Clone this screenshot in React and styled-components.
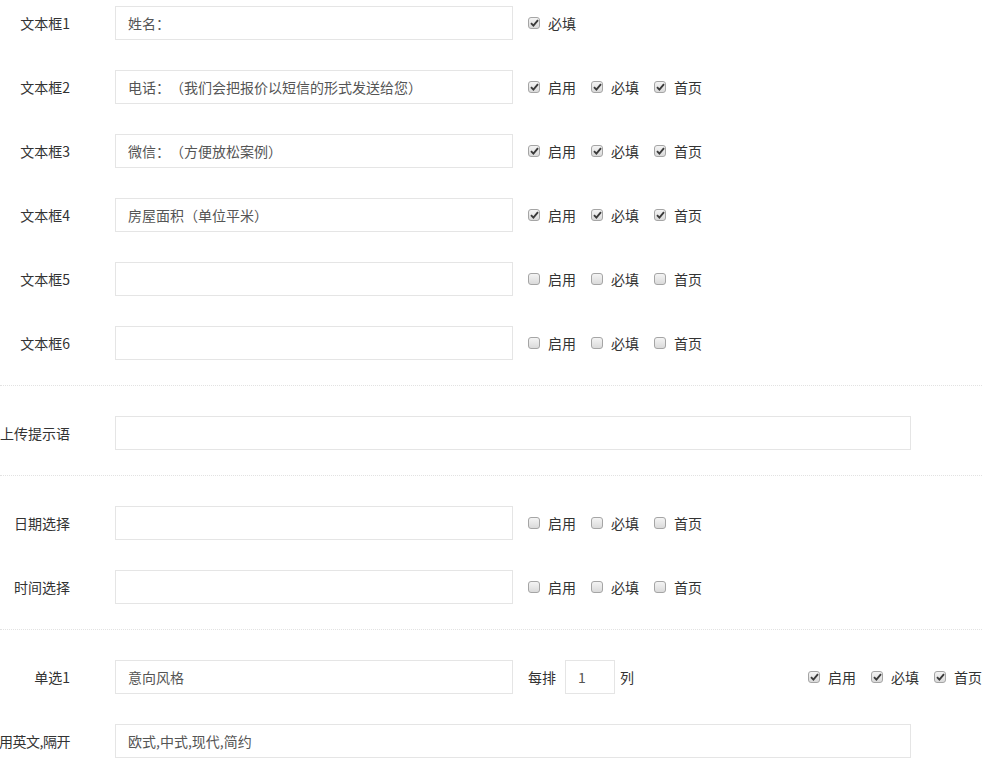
import React from "react";
import styled, { createGlobalStyle } from "styled-components";

const Global = createGlobalStyle`
  html, body { margin: 0; padding: 0; background: #fff; }
  body {
    font-family: "Microsoft YaHei", "Noto Sans CJK SC", "Noto Sans", sans-serif;
    font-size: 14px;
    color: #333;
    overflow: hidden;
    text-spacing-trim: space-all;
  }
  input { text-spacing-trim: space-all; }
`;

const Page = styled.div`
  width: 982px;
`;

const Section = styled.div`
  display: flex;
  flex-direction: column;
  gap: 30px;
  padding-top: ${(p) => p.$top}px;
  padding-bottom: 25px;
  border-bottom: ${(p) => (p.$last ? "none" : "1px dotted #e2e2e2")};
`;

const Row = styled.div`
  display: flex;
  align-items: center;
  height: 34px;
`;

const Label = styled.div`
  width: 70px;
  flex: none;
  display: flex;
  justify-content: flex-end;
  white-space: nowrap;
  color: #333;
  margin-right: 45px;
  letter-spacing: ${(p) => (p.$tight ? "-0.5px" : "0")};
`;

const TextInput = styled.input`
  box-sizing: border-box;
  width: ${(p) => p.$w}px;
  height: 34px;
  flex: none;
  border: 1px solid #e5e5e5;
  padding: 0 12px;
  font: inherit;
  font-size: 14px;
  color: #555;
  background: #fff;
  outline: none;
`;

const Checks = styled.div`
  display: flex;
  align-items: center;
  margin-left: ${(p) => p.$ml}px;
  gap: 15px;
`;

const CheckItem = styled.label`
  display: flex;
  align-items: center;
  white-space: nowrap;
  color: #333;
`;

const Box = styled.span`
  box-sizing: border-box;
  width: 12px;
  height: 12px;
  border: 1px solid #a5a5a5;
  border-radius: 3px;
  background: linear-gradient(#f4f4f4, #dadada);
  margin-right: 8px;
  display: flex;
  align-items: center;
  justify-content: center;
`;

const Inline = styled.span`
  margin-left: ${(p) => p.$ml || 0}px;
  margin-right: ${(p) => p.$mr || 0}px;
  white-space: nowrap;
`;

function Check({ checked, children }) {
  return (
    <CheckItem>
      <Box>
        {checked && (
          <svg width="9" height="8" viewBox="0 0 9 8">
            <path d="M1 4.2 L3.4 6.6 L8 1.2" fill="none" stroke="#3a3a3a" strokeWidth="1.9" />
          </svg>
        )}
      </Box>
      {children}
    </CheckItem>
  );
}

function Trio({ on, ml = 15 }) {
  return (
    <Checks $ml={ml}>
      <Check checked={on}>启用</Check>
      <Check checked={on}>必填</Check>
      <Check checked={on}>首页</Check>
    </Checks>
  );
}

const textRows = [
  { label: "文本框2", value: "电话：（我们会把报价以短信的形式发送给您）", on: true },
  { label: "文本框3", value: "微信：（方便放松案例）", on: true },
  { label: "文本框4", value: "房屋面积（单位平米）", on: true },
  { label: "文本框5", value: "", on: false },
  { label: "文本框6", value: "", on: false },
];

export default function App() {
  return (
    <Page>
      <Global />
      <Section $top={6}>
        <Row>
          <Label>文本框1</Label>
          <TextInput $w={398} defaultValue="姓名：" />
          <Checks $ml={15}>
            <Check checked>必填</Check>
          </Checks>
        </Row>
        {textRows.map((r) => (
          <Row key={r.label}>
            <Label>{r.label}</Label>
            <TextInput $w={398} defaultValue={r.value} />
            <Trio on={r.on} />
          </Row>
        ))}
      </Section>
      <Section $top={30}>
        <Row>
          <Label>上传提示语</Label>
          <TextInput $w={796} defaultValue="" />
        </Row>
      </Section>
      <Section $top={30}>
        <Row>
          <Label>日期选择</Label>
          <TextInput $w={398} defaultValue="" />
          <Trio on={false} />
        </Row>
        <Row>
          <Label>时间选择</Label>
          <TextInput $w={398} defaultValue="" />
          <Trio on={false} />
        </Row>
      </Section>
      <Section $top={30} $last>
        <Row>
          <Label>单选1</Label>
          <TextInput $w={398} defaultValue="意向风格" />
          <Inline $ml={15} $mr={9}>每排</Inline>
          <TextInput $w={50} defaultValue="1" />
          <Inline $ml={5}>列</Inline>
          <Trio on ml={174} />
        </Row>
        <Row>
          <Label $tight>用英文,隔开</Label>
          <TextInput $w={796} defaultValue="欧式,中式,现代,简约" />
        </Row>
      </Section>
    </Page>
  );
}
